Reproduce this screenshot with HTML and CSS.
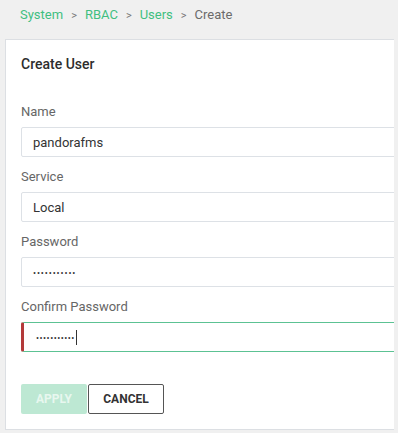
FILE: index.html
```html
<!DOCTYPE html>
<html>
<head>
<meta charset="utf-8">
<link rel="stylesheet" href="styles.css">
</head>
<body>
<nav class="crumbs">
  <a class="crumb-link">System</a><span class="sep">&gt;</span><a class="crumb-link">RBAC</a><span class="sep">&gt;</span><a class="crumb-link">Users</a><span class="sep">&gt;</span><span class="crumb-current">Create</span>
</nav>
<section class="card">
  <h1 class="card-title">Create User</h1>
  <div class="field">
    <label class="field-label">Name</label>
    <div class="input">pandorafms</div>
  </div>
  <div class="field">
    <label class="field-label">Service</label>
    <div class="input">Local</div>
  </div>
  <div class="field">
    <label class="field-label">Password</label>
    <div class="input"><span class="dots">•••••••••••</span></div>
  </div>
  <div class="field">
    <label class="field-label">Confirm Password</label>
    <div class="input input-error"><span class="dots">•••••••••••</span><span class="caret"></span></div>
  </div>
  <div class="actions">
    <button class="btn btn-apply">APPLY</button>
    <button class="btn btn-cancel">CANCEL</button>
  </div>
</section>
</body>
</html>
```
FILE: styles.css
```css
html, body {
  margin: 0;
  padding: 0;
  background: #f0f0f0;
  font-family: Roboto, "Liberation Sans", sans-serif;
}
.crumbs {
  height: 39px;
  box-sizing: border-box;
  padding: 7px 0 0 20px;
  font-size: 13px;
  line-height: 16px;
  color: #6b6b6b;
}
.crumb-link {
  color: #3fbf80;
}
.sep {
  margin: 0 8px;
  font-size: 11px;
  color: #777;
}
.card {
  margin: 0 4px 0 5px;
  background: #fff;
  border: 1px solid #dcdfe3;
  border-right: none;
  overflow: hidden;
  padding: 14px 0 15px 15px;
}
.card-title {
  margin: 0 0 30px 0;
  font-size: 14px;
  line-height: 20px;
  font-weight: 500;
  color: #2d2d2d;
}
.field {
  display: flex;
  flex-direction: column;
  margin-bottom: 12px;
}
.field-label {
  font-size: 13px;
  line-height: 16px;
  color: #666;
  margin-bottom: 7px;
}
.input {
  box-sizing: border-box;
  height: 30px;
  width: calc(100% + 40px);
  border: 1px solid #dde1e6;
  border-radius: 2px;
  padding: 0 11px;
  display: flex;
  align-items: center;
  font-size: 13px;
  color: #333;
}
.dots {
  font-size: 9px;
  line-height: 12px;
  letter-spacing: 0.9px;
  color: #333;
  padding-top: 1px;
}
.input-error {
  border-color: #5cc293;
  border-left: 3px solid #b33a3a;
  padding-left: 12px;
}
.input-error .dots {
  letter-spacing: 0.5px;
}
.caret {
  display: inline-block;
  width: 1px;
  height: 15px;
  background: #333;
  margin-left: 1px;
}
.actions {
  display: flex;
  gap: 1px;
  margin-top: 32px;
}
.btn {
  box-sizing: border-box;
  height: 30px;
  font-family: Roboto, "Liberation Sans", sans-serif;
  font-size: 12px;
  font-weight: 700;
  border-radius: 2px;
  padding: 0;
}
.btn-apply {
  width: 66px;
  background: #bde8d3;
  border: none;
  color: #e8f7ef;
}
.btn-cancel {
  width: 76px;
  background: #fff;
  border: 1px solid #555;
  color: #333;
}
```
